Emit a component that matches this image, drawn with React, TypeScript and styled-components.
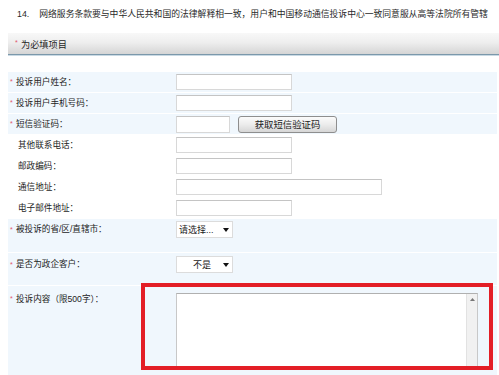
import React from "react";
import styled, { createGlobalStyle } from "styled-components";

const GlobalStyle = createGlobalStyle`
  html, body {
    margin: 0;
    padding: 0;
    background: #fff;
  }
  body {
    font-family: "Liberation Sans", "Noto Sans CJK SC", sans-serif;
    color: #222;
  }
`;

const Page = styled.div`
  position: relative;
  width: 499px;
  height: 375px;
  overflow: hidden;
  background: #fff;
`;

const Clause = styled.div`
  display: flex;
  gap: 10px;
  height: 33px;
  box-sizing: border-box;
  padding: 8px 0 0 17px;
  font-size: 8.8px;
  line-height: 12px;
  white-space: nowrap;
  color: #2a2a2a;
`;

const Section = styled.div`
  margin-left: 8px;
`;

const HeaderBar = styled.div`
  height: 21px;
  display: flex;
  align-items: center;
  padding-left: 7px;
  font-size: 9.2px;
  color: #1f1f1f;
  background: linear-gradient(to bottom, #f8f8f8 0%, #eeeeee 45%, #d5d5d5 100%);
  border-bottom: 1px solid #7b98ab;
  box-shadow: 0 1px 0 #c9d9e3;
`;

const Star = styled.span<{ $top?: number }>`
  color: #e0566a;
  font-size: 7px;
  width: 6px;
  display: inline-block;
  position: relative;
  top: ${(p) => p.$top ?? 0}px;
`;

const Form = styled.div`
  padding-top: 17px;
  width: 489px;
`;

const Row = styled.div<{ $shade?: boolean; $h: number; $align?: "center" | "top"; $pt?: number }>`
  display: grid;
  grid-template-columns: 168px 1fr;
  height: ${(p) => p.$h}px;
  box-sizing: border-box;
  padding-top: ${(p) => p.$pt ?? 0}px;
  align-items: ${(p) => (p.$align === "top" ? "start" : "center")};
  background: ${(p) => (p.$shade ? "#f0f7fd" : "#fff")};
  border-bottom: 1px solid #fff;
`;

const Label = styled.div<{ $lh?: number }>`
  display: flex;
  align-items: center;
  padding-left: 2px;
  font-size: 8.6px;
  line-height: ${(p) => p.$lh ?? 12}px;
  color: #1c1c1c;
  white-space: nowrap;
`;

const Plain = styled.span`
  margin-left: 8px;
`;

const Field = styled.div`
  display: flex;
  align-items: center;
  gap: 8px;
`;

const TextInput = styled.input<{ $w: number; $h?: number }>`
  width: ${(p) => p.$w}px;
  height: ${(p) => p.$h ?? 16}px;
  box-sizing: border-box;
  margin: 0;
  padding: 0 2px;
  border: 1px solid #d8d8d8;
  border-top-color: #c4c4c4;
  background: #fff;
  outline: none;
`;

const SmsButton = styled.button`
  width: 99px;
  height: 17px;
  box-sizing: border-box;
  margin: 0;
  padding: 0;
  border: 1px solid #8e8e8e;
  border-radius: 3px;
  background: linear-gradient(to bottom, #fbfbfb 0%, #ececec 50%, #d6d6d6 100%);
  font-family: "Liberation Sans", "Noto Sans CJK SC", sans-serif;
  font-size: 9.4px;
  color: #1a1a1a;
  line-height: 15px;
`;

const Select = styled.div<{ $pl: number }>`
  position: relative;
  width: 57px;
  height: 17px;
  box-sizing: border-box;
  border: 1px solid #dcdcdc;
  background: #fff;
  display: flex;
  align-items: center;
  padding-left: ${(p) => p.$pl}px;
  font-size: 9px;
  color: #1a1a1a;
`;

const Caret = styled.svg`
  position: absolute;
  right: 3px;
  top: 6px;
`;

const TextAreaBox = styled.div`
  display: flex;
  width: 302px;
  height: 74px;
  box-sizing: border-box;
  border: 1px solid #c8c8c8;
  border-top-color: #b0b0b0;
  background: #fff;
`;

const TextArea = styled.textarea`
  flex: 1;
  border: none;
  resize: none;
  outline: none;
  padding: 2px;
  margin: 0;
  background: #fff;
`;

const ScrollBar = styled.div`
  width: 10px;
  background: #f1f1f1;
  border-left: 1px solid #e2e2e2;
  display: flex;
  justify-content: center;
  padding-top: 4px;
`;

const Annotation = styled.div`
  position: absolute;
  left: 141px;
  top: 283px;
  width: 352px;
  height: 87px;
  box-sizing: border-box;
  border: 4px solid #e31e26;
  pointer-events: none;
`;

function Arrow() {
  return (
    <Caret width="6" height="4" viewBox="0 0 6 4">
      <path d="M0 0 L6 0 L3 4 Z" fill="#111" />
    </Caret>
  );
}

export default function App() {
  return (
    <Page>
      <GlobalStyle />
      <Clause>
        <span>14.</span>
        <span>网络服务条款要与中华人民共和国的法律解释相一致，用户和中国移动通信投诉中心一致同意服从高等法院所有管辖</span>
      </Clause>
      <Section>
        <HeaderBar>
          <Star $top={-1}>*</Star>为必填项目
        </HeaderBar>
        <Form>
          <Row $shade $h={21}>
            <Label><Star>*</Star>投诉用户姓名：</Label>
            <Field><TextInput $w={116} /></Field>
          </Row>
          <Row $shade $h={21}>
            <Label><Star>*</Star>投诉用户手机号码：</Label>
            <Field><TextInput $w={116} /></Field>
          </Row>
          <Row $shade $h={21}>
            <Label><Star>*</Star>短信验证码：</Label>
            <Field>
              <TextInput $w={54} $h={17} />
              <SmsButton type="button">获取短信验证码</SmsButton>
            </Field>
          </Row>
          <Row $h={21}>
            <Label><Plain>其他联系电话：</Plain></Label>
            <Field><TextInput $w={116} /></Field>
          </Row>
          <Row $h={21}>
            <Label><Plain>邮政编码：</Plain></Label>
            <Field><TextInput $w={116} /></Field>
          </Row>
          <Row $h={21}>
            <Label><Plain>通信地址：</Plain></Label>
            <Field><TextInput $w={206} /></Field>
          </Row>
          <Row $h={21}>
            <Label><Plain>电子邮件地址：</Plain></Label>
            <Field><TextInput $w={116} /></Field>
          </Row>
          <Row $shade $h={34} $align="top" $pt={2}>
            <Label $lh={17}><Star>*</Star>被投诉的省/区/直辖市：</Label>
            <Field>
              <Select $pl={2}>请选择...<Arrow /></Select>
            </Field>
          </Row>
          <Row $shade $h={33} $align="top" $pt={3}>
            <Label $lh={17}><Star>*</Star>是否为政企客户：</Label>
            <Field>
              <Select $pl={16}>不是<Arrow /></Select>
            </Field>
          </Row>
          <Row $shade $h={100} $align="top" $pt={7}>
            <Label><Star>*</Star>投诉内容（限500字）：</Label>
            <Field>
              <TextAreaBox>
                <TextArea />
                <ScrollBar>
                  <svg width="5" height="3" viewBox="0 0 5 3">
                    <path d="M0 3 L2.5 0 L5 3 Z" fill="#777" />
                  </svg>
                </ScrollBar>
              </TextAreaBox>
            </Field>
          </Row>
        </Form>
      </Section>
      <Annotation />
    </Page>
  );
}
